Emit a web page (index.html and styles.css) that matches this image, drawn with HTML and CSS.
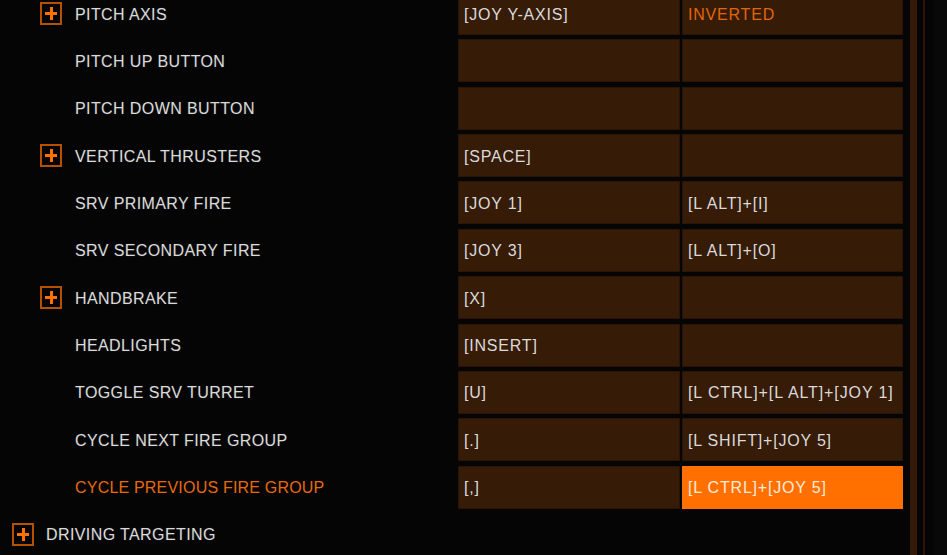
FILE: index.html
```html
<!DOCTYPE html>
<html>
<head>
<meta charset="utf-8">
<link rel="stylesheet" href="styles.css">
</head>
<body>
<div class="screen">
  <div class="list">
    <div class="row">
      <div class="label"><span class="plus"></span><span>PITCH AXIS</span></div>
      <div class="cell">[JOY Y-AXIS]</div>
      <div class="cell accent">INVERTED</div>
    </div>
    <div class="row">
      <div class="label"><span class="gap"></span><span>PITCH UP BUTTON</span></div>
      <div class="cell"></div>
      <div class="cell"></div>
    </div>
    <div class="row">
      <div class="label"><span class="gap"></span><span>PITCH DOWN BUTTON</span></div>
      <div class="cell"></div>
      <div class="cell"></div>
    </div>
    <div class="row">
      <div class="label"><span class="plus"></span><span>VERTICAL THRUSTERS</span></div>
      <div class="cell">[SPACE]</div>
      <div class="cell"></div>
    </div>
    <div class="row">
      <div class="label"><span class="gap"></span><span>SRV PRIMARY FIRE</span></div>
      <div class="cell">[JOY 1]</div>
      <div class="cell">[L ALT]+[I]</div>
    </div>
    <div class="row">
      <div class="label"><span class="gap"></span><span>SRV SECONDARY FIRE</span></div>
      <div class="cell">[JOY 3]</div>
      <div class="cell">[L ALT]+[O]</div>
    </div>
    <div class="row">
      <div class="label"><span class="plus"></span><span>HANDBRAKE</span></div>
      <div class="cell">[X]</div>
      <div class="cell"></div>
    </div>
    <div class="row">
      <div class="label"><span class="gap"></span><span>HEADLIGHTS</span></div>
      <div class="cell">[INSERT]</div>
      <div class="cell"></div>
    </div>
    <div class="row">
      <div class="label"><span class="gap"></span><span>TOGGLE SRV TURRET</span></div>
      <div class="cell">[U]</div>
      <div class="cell wide">[L CTRL]+[L ALT]+[JOY 1]</div>
    </div>
    <div class="row">
      <div class="label"><span class="gap"></span><span>CYCLE NEXT FIRE GROUP</span></div>
      <div class="cell">[.]</div>
      <div class="cell">[L SHIFT]+[JOY 5]</div>
    </div>
    <div class="row">
      <div class="label selected"><span class="gap"></span><span>CYCLE PREVIOUS FIRE GROUP</span></div>
      <div class="cell">[,]</div>
      <div class="cell active">[L CTRL]+[JOY 5]</div>
    </div>
    <div class="row">
      <div class="label group"><span class="plus"></span><span>DRIVING TARGETING</span></div>
    </div>
  </div>
  <div class="track"><div class="thumb"></div><div class="rail"></div></div>
  <div class="side">
    <p>Controls the pitch</p>
    <p>Changes the axis</p>
    <p class="para">Change the way the</p>
    <p>rotation of the vehicle</p>
    <p>in the selected mode</p>
  </div>
</div>
</body>
</html>
```

FILE: styles.css
```css
html, body {
  margin: 0;
  padding: 0;
  background: #050505;
  overflow: hidden;
}

body {
  width: 947px;
  height: 555px;
  font-family: "Liberation Sans", Arial, sans-serif;
  font-size: 16px;
  letter-spacing: 0.4px;
  color: #dadada;
}

.screen {
  display: flex;
  height: 555px;
  overflow: hidden;
}

.list {
  width: 903px;
  flex: none;
  display: flex;
  flex-direction: column;
  gap: 4.37px;
  margin-top: -8px;
}

.row {
  display: grid;
  grid-template-columns: 456px 222px 221px;
  column-gap: 2px;
  height: 43px;
  flex: none;
}

.label {
  display: flex;
  align-items: center;
  padding-left: 40px;
  padding-top: 2px;
  gap: 13px;
  white-space: nowrap;
  letter-spacing: 0.4px;
  text-shadow: 0 0 2px rgba(255, 255, 255, 0.15);
}

.label.group {
  padding-left: 12px;
  gap: 12px;
}

.label.selected {
  color: #e8690c;
  text-shadow: none;
  letter-spacing: 0.2px;
}

.plus,
.gap {
  width: 22px;
  height: 23px;
  flex: none;
  box-sizing: border-box;
}

.plus {
  border: 2px solid #b55200;
  position: relative;
  margin-top: -2px;
}

.plus::before,
.plus::after {
  content: "";
  position: absolute;
  background: #ff7100;
}

.plus::before {
  left: 3px;
  right: 3px;
  top: 8px;
  height: 3px;
}

.plus::after {
  top: 3px;
  bottom: 3px;
  left: 8px;
  width: 3px;
}

.cell {
  background: #361b07;
  box-shadow: inset 0 0 0 1px #2a1405;
  display: flex;
  align-items: center;
  padding-left: 6px;
  padding-top: 2px;
  white-space: nowrap;
  overflow: hidden;
  letter-spacing: 0.8px;
}

.cell.wide {
  letter-spacing: 0.9px;
}

.cell.accent {
  color: #e3650a;
}

.cell.active {
  background: #ff7000;
  box-shadow: none;
  color: #ffeadb;
}

.track {
  width: 24px;
  flex: none;
  display: flex;
  padding-left: 7px;
  gap: 6px;
}

.thumb {
  width: 7px;
  background: #331a08;
}

.rail {
  width: 2px;
  background: #2e1607;
}

.side {
  flex: 1;
  padding-left: 18px;
  padding-top: 4px;
  overflow: hidden;
  background: #080808;
  white-space: nowrap;
  color: #dcdcdc;
}

.side p {
  margin: 0;
  height: 22px;
  line-height: 22px;
}

.side p:nth-child(2) {
  margin-top: 12px;
}

.side .para {
  margin-top: 22px;
}
```
